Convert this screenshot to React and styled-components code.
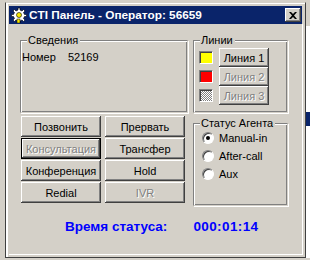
import React from 'react';
import styled, { createGlobalStyle, css } from 'styled-components';

const GlobalStyle = createGlobalStyle`
	html, body {
		margin: 0;
		padding: 0;
	}
	body {
		background: #d4d0c8;
		font-family: "Liberation Sans", Arial, sans-serif;
		font-size: 11px;
		overflow: hidden;
	}
`;

const Desktop = styled.div`
	position: relative;
	width: 310px;
	height: 260px;
	box-sizing: border-box;
	padding: 2px 0 0 5px;
	display: flex;
	align-items: flex-start;
`;

const BackStrip = styled.div`
	width: 4px;
	height: 258px;
	margin-top: -2px;
	background: linear-gradient(#d4d0c8 0 26px, #fff 26px 112px, #0a246a 112px 126px, #fff 126px);
`;

const Window = styled.div`
	width: 301px;
	height: 256px;
	box-sizing: border-box;
	border: 1px solid #404040;
	border-top-color: #d4d0c8;
	padding: 3px 3px 2px 3px;
	box-shadow: inset 2px 0 #fff, inset 0 1px #fff;
	background: #d4d0c8;
	display: flex;
	flex-direction: column;
`;

const TitleBar = styled.div`
	height: 18px;
	flex: none;
	background: #0a246a;
	display: flex;
	align-items: center;
	padding: 0 1px 0 2px;
	gap: 2px;
`;

const TitleText = styled.span`
	flex: 1;
	color: #fff;
	font-weight: bold;
	font-size: 11.8px;
	white-space: nowrap;
`;

const CloseButton = styled.button`
	width: 16px;
	height: 14px;
	padding: 0;
	border: none;
	background: #d4d0c8;
	box-shadow: inset -1px -1px #404040, inset 1px 1px #fff, inset -2px -2px #808080;
	display: flex;
	align-items: center;
	justify-content: center;
`;

const Client = styled.div`
	flex: 1;
	margin-right: -1px;
	border-right: 1px solid #fff;
	border-bottom: 1px solid #fff;
	padding: 16px 0 0 11px;
	display: flex;
	flex-direction: column;
`;

const Columns = styled.div`
	display: grid;
	grid-template-columns: 168px 95px;
	column-gap: 5px;
	align-items: start;
`;

const Column = styled.div`
	display: flex;
	flex-direction: column;
`;

const GroupBox = styled.div`
	position: relative;
	box-sizing: border-box;
	height: ${(p) => p.$height}px;
	margin-top: ${(p) => p.$top || 0}px;
	border: 1px solid #808080;
	border-right-color: transparent;
	border-bottom-color: transparent;
	box-shadow: inset 1px 1px #fff, 1px 1px #fff, inset -1px -1px #808080;
	padding: ${(p) => p.$pad};
`;

const GroupLabel = styled.span`
	position: absolute;
	top: -7px;
	left: 6px;
	padding: 0 2px 0 1px;
	background: #d4d0c8;
	line-height: 13px;
	color: #000;
`;

const InfoRow = styled.div`
	display: grid;
	grid-template-columns: 46px auto;
	line-height: 13px;
`;

const LineRow = styled.div`
	display: flex;
	align-items: center;
	gap: 6px;
	height: 19px;
`;

const Lamp = styled.span`
	width: 14px;
	height: 13px;
	box-sizing: border-box;
	border: 1px solid;
	border-color: #808080 #fff #fff #808080;
	box-shadow: inset 1px 1px #404040;
	background: ${(p) => p.$color};
	${(p) =>
		p.$idle &&
		css`
			background: repeating-conic-gradient(#808080 0 25%, #fff 0 50%) 0 0 / 2px 2px;
		`}
`;

const Button = styled.button`
	box-sizing: border-box;
	width: ${(p) => p.$width}px;
	height: ${(p) => p.$height}px;
	padding: 0;
	font-family: inherit;
	font-size: 11px;
	color: #000;
	background: #d4d0c8;
	border: none;
	box-shadow: inset -1px -1px #404040, inset 1px 1px #fff, inset -2px -2px #808080;
	${(p) =>
		p.$default &&
		css`
			border: 1px solid #000;
		`}
	&:disabled {
		color: #808080;
		text-shadow: 1px 1px #fff;
	}
`;

const ButtonGrid = styled.div`
	display: grid;
	grid-template-columns: 80px 80px;
	grid-auto-rows: 21px;
	column-gap: 4px;
	row-gap: 1px;
	margin: 3px 0 0 1px;
`;

const RadioRow = styled.label`
	display: flex;
	align-items: center;
	gap: 5px;
	height: 18px;
`;

const RadioDot = styled.span`
	position: relative;
	width: 12px;
	height: 12px;
	box-sizing: border-box;
	border-radius: 50%;
	border: 1px solid;
	border-color: #808080 #fff #fff #808080;
	box-shadow: inset 1px 1px #404040;
	background: #fff;
	&::after {
		content: '';
		display: ${(p) => (p.$checked ? 'block' : 'none')};
		position: absolute;
		left: 3px;
		top: 3px;
		width: 4px;
		height: 4px;
		border-radius: 50%;
		background: #000;
	}
`;

const StatusRow = styled.div`
	display: flex;
	gap: 26px;
	margin: 13px 0 0 45px;
	color: #0000ff;
	font-weight: bold;
	font-size: 13.5px;
	line-height: 16px;
`;

const StatusTime = styled.span`
	letter-spacing: 0.4px;
`;

function AppIcon() {
	return (
		<svg width="16" height="16" viewBox="0 0 16 16">
			<path d="M7 1l2 0 0 2 2 1 1.5-1.5 1.5 1.5-1.5 1.5 1 2 2 0 0 2-2 0-1 2 1.5 1.5-1.5 1.5-1.5-1.5-2 1 0 2-2 0 0-2-2-1-1.5 1.5-1.5-1.5 1.5-1.5-1-2-2 0 0-2 2 0 1-2-1.5-1.5 1.5-1.5 1.5 1.5 2-1z" fill="#fff" stroke="#000" strokeWidth="0.6" />
			<circle cx="8" cy="8" r="2.5" fill="#f8e800" stroke="#000" strokeWidth="0.6" />
			<rect x="6" y="12" width="3" height="4" fill="#f8e800" stroke="#000" strokeWidth="0.5" />
		</svg>
	);
}

const actions = [
	{ label: 'Позвонить' },
	{ label: 'Прервать' },
	{ label: 'Консультация', disabled: true, isDefault: true },
	{ label: 'Трансфер' },
	{ label: 'Конференция' },
	{ label: 'Hold' },
	{ label: 'Redial' },
	{ label: 'IVR', disabled: true },
];

const lines = [
	{ label: 'Линия 1', color: '#ffff00' },
	{ label: 'Линия 2', color: '#ff0000', disabled: true },
	{ label: 'Линия 3', idle: true, disabled: true },
];

const statuses = ['Manual-in', 'After-call', 'Aux'];

export default function App() {
	return (
		<>
			<GlobalStyle />
			<Desktop>
				<Window>
					<TitleBar>
						<AppIcon />
						<TitleText>CTI Панель - Оператор: 56659</TitleText>
						<CloseButton aria-label="Закрыть">
							<svg width="8" height="7" viewBox="0 0 8 7">
								<path d="M0 0h2l2 2 2-2h2l-3 3.5 3 3.5h-2l-2-2-2 2h-2l3-3.5z" fill="#000" />
							</svg>
						</CloseButton>
					</TitleBar>
					<Client>
						<Columns>
							<Column>
								<GroupBox $height={73} $pad="10px 0 0 1px">
									<GroupLabel>Сведения</GroupLabel>
									<InfoRow>
										<span>Номер</span>
										<span>52169</span>
									</InfoRow>
								</GroupBox>
								<ButtonGrid>
									{actions.map((a) => (
										<Button key={a.label} $width={80} $height={21} disabled={a.disabled} $default={a.isDefault}>
											{a.label}
										</Button>
									))}
								</ButtonGrid>
							</Column>
							<Column>
								<GroupBox $height={73} $pad="7px 0 0 5px">
									<GroupLabel>Линии</GroupLabel>
									{lines.map((l) => (
										<LineRow key={l.label}>
											<Lamp $color={l.color} $idle={l.idle} />
											<Button $width={50} $height={19} disabled={l.disabled}>
												{l.label}
											</Button>
										</LineRow>
									))}
								</GroupBox>
								<GroupBox $height={83} $top={10} $pad="5px 0 0 8px">
									<GroupLabel>Статус Агента</GroupLabel>
									{statuses.map((s, i) => (
										<RadioRow key={s}>
											<RadioDot $checked={i === 0} />
											<span>{s}</span>
										</RadioRow>
									))}
								</GroupBox>
							</Column>
						</Columns>
						<StatusRow>
							<span>Время статуса:</span>
							<StatusTime>000:01:14</StatusTime>
						</StatusRow>
					</Client>
				</Window>
				<BackStrip />
			</Desktop>
		</>
	);
}
